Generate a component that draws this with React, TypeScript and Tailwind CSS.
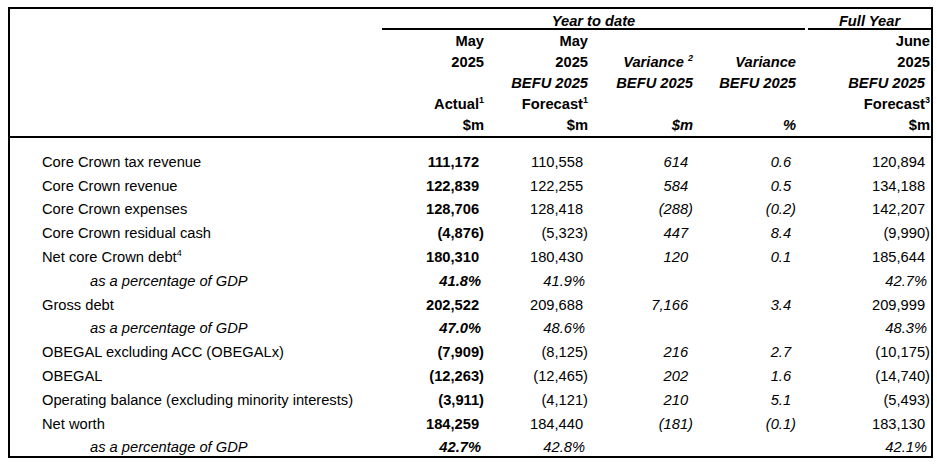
import React from 'react';

interface Row {
    label: string;
    sup?: string;
    pct?: boolean;
    values: string[];
}

const rows: Row[] = [
    { label: 'Core Crown tax revenue', values: ['111,172', '110,558', '614', '0.6', '120,894'] },
    { label: 'Core Crown revenue', values: ['122,839', '122,255', '584', '0.5', '134,188'] },
    { label: 'Core Crown expenses', values: ['128,706', '128,418', '(288)', '(0.2)', '142,207'] },
    { label: 'Core Crown residual cash', values: ['(4,876)', '(5,323)', '447', '8.4', '(9,990)'] },
    { label: 'Net core Crown debt', sup: '4', values: ['180,310', '180,430', '120', '0.1', '185,644'] },
    { label: 'as a percentage of GDP', pct: true, values: ['41.8%', '41.9%', '', '', '42.7%'] },
    { label: 'Gross debt', values: ['202,522', '209,688', '7,166', '3.4', '209,999'] },
    { label: 'as a percentage of GDP', pct: true, values: ['47.0%', '48.6%', '', '', '48.3%'] },
    { label: 'OBEGAL excluding ACC (OBEGALx)', values: ['(7,909)', '(8,125)', '216', '2.7', '(10,175)'] },
    { label: 'OBEGAL', values: ['(12,263)', '(12,465)', '202', '1.6', '(14,740)'] },
    { label: 'Operating balance (excluding minority interests)', values: ['(3,911)', '(4,121)', '210', '5.1', '(5,493)'] },
    { label: 'Net worth', values: ['184,259', '184,440', '(181)', '(0.1)', '183,130'] },
    { label: 'as a percentage of GDP', pct: true, values: ['42.7%', '42.8%', '', '', '42.1%'] },
];

// column right edges: 484 / 588 / 693 / 796 / 930
const grid = 'grid grid-cols-[372px_102px_104px_105px_112px_126px]';
const cellPad = ['', '', '', 'pr-[9px]', 'pr-[1px]'];

// Excel style "#,##0_);(#,##0)" – positives leave room for the ")"
const hang = (v: string) => {
    if (!v || v.startsWith('(')) return '';
    if (v.endsWith('%')) return 'pr-[3px]';
    return 'pr-[0.333em]';
};

const Sup = ({ children }: { children: React.ReactNode }) => (
    <sup className="text-[9px] -top-[6px]">{children}</sup>
);

const HeadRow = ({ cells }: { cells: React.ReactNode[] }) => (
    <div className={`${grid} h-[21px] items-center`}>
        <div />
        {cells.map((c, i) => (
            <div key={i} className={`text-right ${cellPad[i]}`}>{c}</div>
        ))}
    </div>
);

const App: React.FC = () => {
    const bi = 'font-bold italic';

    return (
        <div className="min-h-screen bg-white pl-[8px] pt-[7px]" style={{ fontFamily: '"Liberation Sans", Arial, sans-serif' }}>
            <div className="w-[925px] border-2 border-black text-[14.7px] text-black">
                {/* Header */}
                <div className={`${grid} h-[21px]`}>
                    <div />
                    <div className={`col-span-4 border-b-2 border-black flex items-end justify-center leading-[13px] ${bi}`}>
                        Year to date
                    </div>
                    <div className={`ml-[3px] border-b-2 border-black flex items-end justify-center leading-[13px] ${bi}`}>
                        Full Year
                    </div>
                </div>
                <div className="font-bold">
                    <HeadRow cells={['May', 'May', '', '', 'June']} />
                    <HeadRow
                        cells={[
                            '2025',
                            '2025',
                            <span className="italic">Variance <Sup>2</Sup></span>,
                            <span className="italic">Variance</span>,
                            '2025',
                        ]}
                    />
                    <HeadRow
                        cells={[
                            '',
                            <span className="italic">BEFU 2025</span>,
                            <span className="italic">BEFU 2025</span>,
                            <span className="italic">BEFU 2025</span>,
                            <span className="italic pr-[5px]">BEFU 2025</span>,
                        ]}
                    />
                    <HeadRow
                        cells={[
                            <span>Actual<Sup>1</Sup></span>,
                            <span>Forecast<Sup>1</Sup></span>,
                            '',
                            '',
                            <span>Forecast<Sup>3</Sup></span>,
                        ]}
                    />
                    <HeadRow cells={['$m', '$m', <span className="italic">$m</span>, <span className="italic">%</span>, '$m']} />
                </div>
                <div className="mt-[1px] h-[2px] bg-black" />

                {/* Body */}
                <div className="h-[318px] pt-[12px]">
                    {rows.map((r, ri) => (
                        <div key={ri} className={`${grid} h-[23.8px] items-center`}>
                            <div className={r.pct ? 'pl-[80px] italic' : 'pl-[32px]'}>
                                {r.label}
                                {r.sup && <Sup>{r.sup}</Sup>}
                            </div>
                            {r.values.map((v, i) => {
                                let style = '';
                                if (i === 0) style = r.pct ? 'font-bold italic' : 'font-bold';
                                else if (i === 2 || i === 3) style = 'italic';
                                else style = r.pct ? 'italic' : '';
                                return (
                                    <div key={i} className={`text-right ${cellPad[i]}`}>
                                        <span className={`${style} ${hang(v)}`}>{v}</span>
                                    </div>
                                );
                            })}
                        </div>
                    ))}
                </div>
            </div>
        </div>
    );
};

export default App;
